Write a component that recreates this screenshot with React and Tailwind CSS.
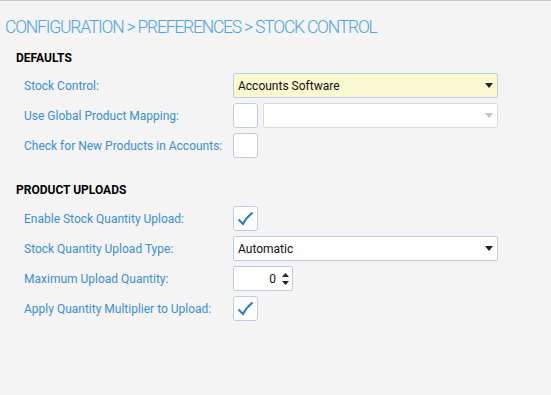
const Caret = ({ light }) => (
  <svg width="8" height="5" viewBox="0 0 8 5" className="shrink-0">
    <path d="M0 0 L8 0 L4 5 Z" fill={light ? "#c4c4c4" : "#222"} />
  </svg>
);

const Check = ({ checked }) => (
  <div className="w-[25px] h-[25px] bg-white border border-[#bccde2] rounded-[3px] flex items-center justify-center">
    {checked && (
      <svg width="17" height="15" viewBox="0 0 17 15">
        <path d="M1.5 8.5 L6 13 Q9 7 15.5 1.5" fill="none" stroke="#2d7cc1" strokeWidth="2" />
      </svg>
    )}
  </div>
);

const Row = ({ label, children }) => (
  <div className="flex items-center h-[25px]">
    <div className="w-[209px] shrink-0 text-[12px] text-[#3b8fd0]">{label}</div>
    <div className="flex items-center gap-[5px]">{children}</div>
  </div>
);

const App = () => {
  return (
    <div
      className="w-full h-[395px] bg-[#f4f4f4] border-t border-[#c9c9c9] overflow-hidden"
      style={{ fontFamily: "Roboto, 'Liberation Sans', sans-serif" }}
    >
      <h1 className="pl-[5px] pt-[14px] text-[17.5px] leading-[24px] font-light tracking-[-1.2px] text-[#4ea3e0]">
        CONFIGURATION &gt; PREFERENCES &gt; STOCK CONTROL
      </h1>

      <div className="pl-[16px] pt-[11px]">
        <h2 className="text-[12px] leading-[16px] font-bold text-black">DEFAULTS</h2>
        <div className="pl-[8px] pt-[7px] flex flex-col gap-[5px]">
          <Row label="Stock Control:">
            <div className="w-[265px] h-[25px] bg-[#f9f9d2] border border-[#bccde2] rounded-[2px] flex items-center justify-between pl-[4px] pr-[4px] text-[12px] text-[#111]">
              <span>Accounts Software</span>
              <Caret />
            </div>
          </Row>
          <Row label="Use Global Product Mapping:">
            <Check />
            <div className="w-[235px] h-[25px] bg-white border border-[#dadada] rounded-[2px] flex items-center justify-end pr-[4px]">
              <Caret light />
            </div>
          </Row>
          <Row label="Check for New Products in Accounts:">
            <Check />
          </Row>
        </div>

        <h2 className="mt-[24px] text-[12px] leading-[16px] font-bold text-black">PRODUCT UPLOADS</h2>
        <div className="pl-[8px] pt-[8px] flex flex-col gap-[5px]">
          <Row label="Enable Stock Quantity Upload:">
            <Check checked />
          </Row>
          <Row label="Stock Quantity Upload Type:">
            <div className="w-[265px] h-[25px] bg-white border border-[#bccde2] rounded-[2px] flex items-center justify-between pl-[4px] pr-[4px] text-[12px] text-[#111]">
              <span>Automatic</span>
              <Caret />
            </div>
          </Row>
          <Row label="Maximum Upload Quantity:">
            <div className="w-[60px] h-[25px] bg-white border border-[#bccde2] rounded-[2px] flex items-center justify-end pr-[3px] gap-[6px] text-[12px] text-[#111]">
              <span>0</span>
              <div className="flex flex-col gap-[4px]">
                <svg width="7" height="4" viewBox="0 0 7 4"><path d="M0 4 L7 4 L3.5 0 Z" fill="#222" /></svg>
                <svg width="7" height="4" viewBox="0 0 7 4"><path d="M0 0 L7 0 L3.5 4 Z" fill="#222" /></svg>
              </div>
            </div>
          </Row>
          <Row label="Apply Quantity Multiplier to Upload:">
            <Check checked />
          </Row>
        </div>
      </div>
    </div>
  );
};

export default App;
